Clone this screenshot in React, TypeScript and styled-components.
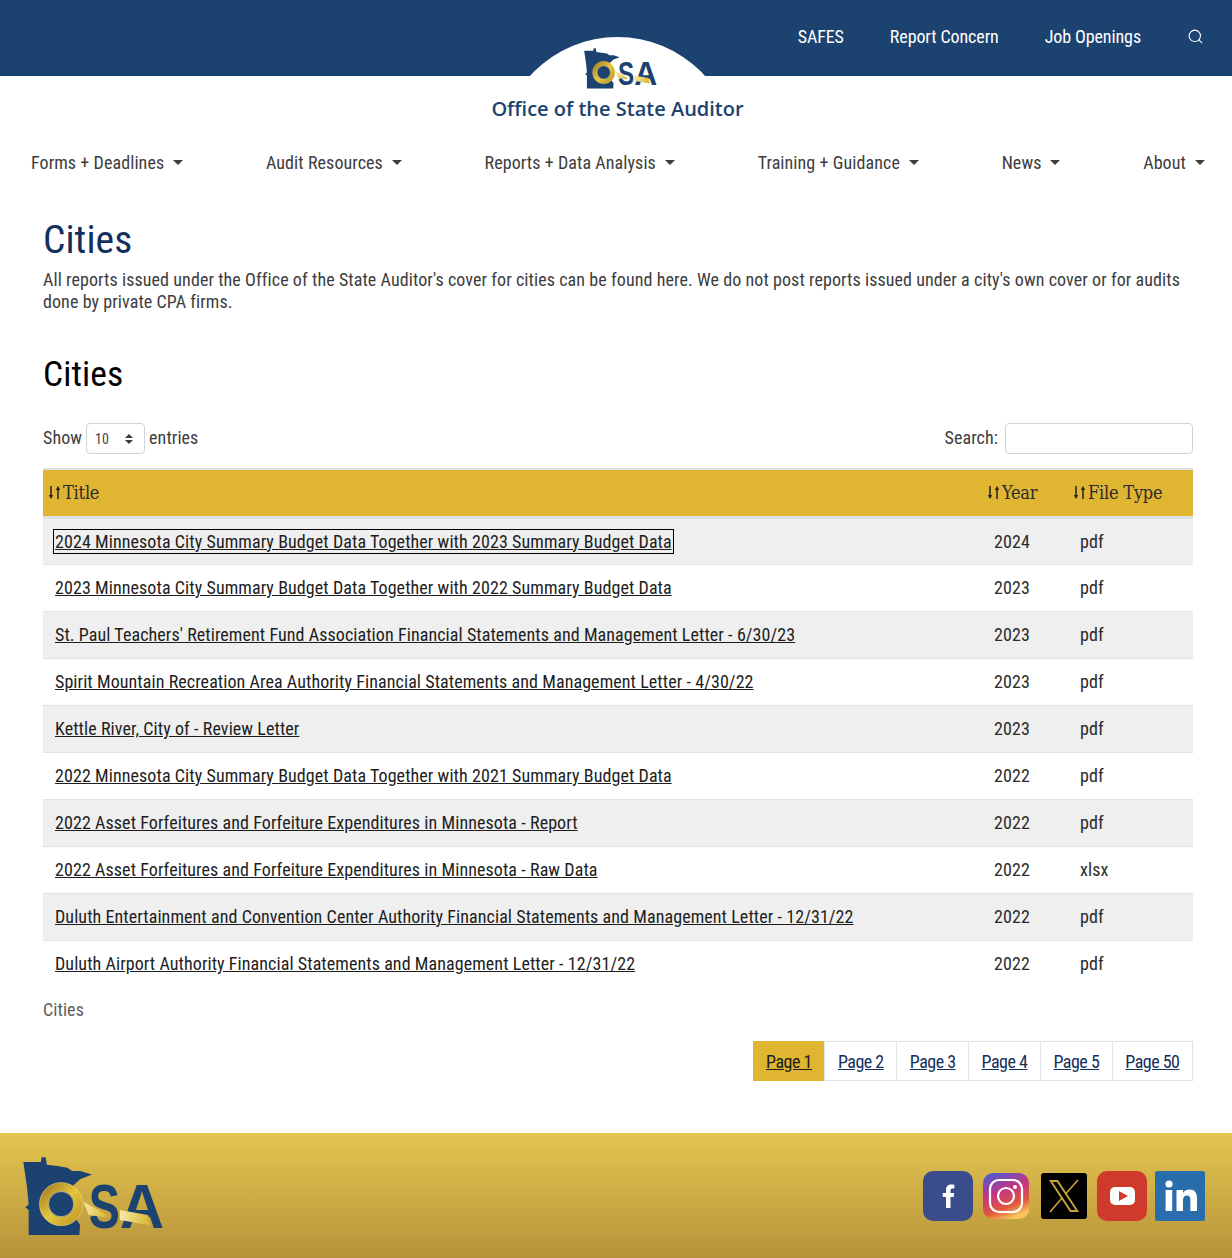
import React from 'react';
import styled, { createGlobalStyle } from 'styled-components';
import { FiSearch } from 'react-icons/fi';

const GlobalStyle = createGlobalStyle`
    html, body {
        margin: 0;
        padding: 0;
        background: #fff;
    }
    body {
        font-family: Roboto, "Noto Sans", sans-serif;
        font-stretch: 75%;
        font-size: 18px;
        letter-spacing: 0.08px;
        color: #3d3d3d;
    }
`;

const TopBar = styled.header`
    position: relative;
    height: 76px;
    background: #1c4270;
    display: flex;
    justify-content: flex-end;
    align-items: center;
    gap: 46px;
    padding: 0 28px 3px 0;
    box-sizing: border-box;
`;

const TopLink = styled.a`
    color: #fff;
    font-size: 18px;
    line-height: 22px;
    letter-spacing: -0.1px;
`;

const SearchIcon = styled(FiSearch)`
    stroke-width: 1.5;
`;

const Dome = styled.div`
    position: absolute;
    left: 530px;
    top: 37px;
    width: 175px;
    height: 39px;
    background: #fff;
    clip-path: circle(118px at 87.5px 118px);
`;

const HeaderLogo = styled.div`
    position: absolute;
    left: 584px;
    top: 48px;
    z-index: 2;
`;

const Brand = styled.div`
    height: 66px;
    display: flex;
    justify-content: center;
    padding: 19px 0 0 3px;
    box-sizing: border-box;
    font-family: "Open Sans", sans-serif;
    font-stretch: 100%;
    font-size: 20px;
    line-height: 27px;
    font-weight: 600;
    letter-spacing: 0;
    color: #1c4270;
`;

const MainNav = styled.nav`
    display: flex;
    justify-content: space-between;
    padding: 9px 27px 0 31px;
    height: 42px;
    box-sizing: border-box;
`;

const NavItem = styled.a`
    display: flex;
    align-items: center;
    gap: 9px;
    height: 22px;
    color: #3d3d3d;
`;

const Caret = styled.span`
    width: 0;
    height: 0;
    border-top: 5px solid #3d3d3d;
    border-left: 5px solid transparent;
    border-right: 5px solid transparent;
`;

const Main = styled.main`
    padding: 34px 39px 52px 43px;
`;

const PageTitle = styled.h1`
    margin: 0 0 7px;
    font-size: 39.5px;
    line-height: 44px;
    font-weight: 400;
    color: #142f5e;
`;

const Intro = styled.p`
    margin: 0 0 41px;
    line-height: 22px;
`;

const SectionTitle = styled.h2`
    margin: 0 0 29px;
    font-size: 35.5px;
    line-height: 40px;
    font-weight: 400;
    color: #000;
`;

const Controls = styled.div`
    display: flex;
    justify-content: space-between;
    align-items: center;
    height: 31px;
    margin-bottom: 14px;
`;

const Label = styled.label`
    display: flex;
    align-items: center;
    gap: 4px;
`;

const LabelText = styled.span`
    margin-top: -3px;
`;

const SelectWrap = styled.span`
    position: relative;
    display: inline-flex;
`;

const PageSize = styled.select`
    appearance: none;
    width: 59px;
    height: 31px;
    padding: 0 8px;
    border: 1px solid #ced4da;
    border-radius: 4px;
    background: #fff;
    color: #444;
    font-family: Roboto, sans-serif;
    font-stretch: 75%;
    font-size: 14px;
`;

const SelectArrows = styled.svg`
    position: absolute;
    right: 11px;
    top: 10px;
    pointer-events: none;
`;

const SearchInput = styled.input`
    width: 188px;
    height: 31px;
    margin-left: 3px;
    box-sizing: border-box;
    border: 1px solid #ced4da;
    border-radius: 4px;
    background: #fff;
`;

const Table = styled.table`
    width: 1150px;
    table-layout: fixed;
    border-collapse: collapse;
    border-top: 2px solid #dee2e6;
`;

const HeadRow = styled.tr`
    height: 48px;
    background: #dfb531;
    border-bottom: 3px solid #dee2e6;
`;

const Th = styled.th`
    padding: 1px 0 0 5px;
    text-align: left;
    font-family: "DejaVu Serif Condensed", "Liberation Serif", serif;
    font-stretch: normal;
    font-size: 18px;
    font-weight: 400;
    letter-spacing: -0.2px;
    color: #2b2b2b;
`;

const ThInner = styled.span`
    display: inline-flex;
    align-items: center;
    gap: 2px;
`;

const Row = styled.tr<{ $striped: boolean }>`
    height: 47px;
    background: ${({ $striped }) => ($striped ? '#efefef' : '#fff')};
    border-bottom: 1px solid #dee2e6;
    &:last-child {
        border-bottom: none;
    }
`;

const Td = styled.td`
    padding: 0 0 0 12px;
    color: #2b2b2b;
`;

const TitleLink = styled.a<{ $focused: boolean }>`
    color: #1d1d1d;
    text-decoration: underline;
    outline: ${({ $focused }) => ($focused ? '1.5px solid #000' : 'none')};
    outline-offset: 1px;
`;

const Caption = styled.div`
    margin-top: 12px;
    height: 42px;
    line-height: 22px;
    color: #5c5c5c;
`;

const Pager = styled.div`
    display: flex;
    justify-content: flex-end;
`;

const PageLink = styled.a<{ $active: boolean }>`
    height: 40px;
    box-sizing: border-box;
    display: flex;
    align-items: center;
    padding: 0 12.5px;
    border: 1px solid ${({ $active }) => ($active ? '#dfb531' : '#dee2e6')};
    margin-left: -1px;
    background: ${({ $active }) => ($active ? '#dfb531' : '#fff')};
    color: ${({ $active }) => ($active ? '#1d1d1d' : '#142f5e')};
    text-decoration: underline;
    letter-spacing: -0.5px;
`;

const Footer = styled.footer`
    height: 125px;
    box-sizing: border-box;
    padding: 24px 27px 0 23px;
    display: flex;
    justify-content: space-between;
    align-items: flex-start;
    background: linear-gradient(180deg, #e3c54f 0%, #b8933a 100%);
`;

const Socials = styled.div`
    display: flex;
    align-items: center;
    gap: 8px;
    margin-top: 14px;
`;

const SocialIcon = styled.svg<{ $small?: boolean }>`
    display: block;
    margin: ${({ $small }) => ($small ? '0 2px' : '0')};
`;

const rows = [
    ['2024 Minnesota City Summary Budget Data Together with 2023 Summary Budget Data', '2024', 'pdf'],
    ['2023 Minnesota City Summary Budget Data Together with 2022 Summary Budget Data', '2023', 'pdf'],
    ["St. Paul Teachers' Retirement Fund Association Financial Statements and Management Letter - 6/30/23", '2023', 'pdf'],
    ['Spirit Mountain Recreation Area Authority Financial Statements and Management Letter - 4/30/22', '2023', 'pdf'],
    ['Kettle River, City of - Review Letter', '2023', 'pdf'],
    ['2022 Minnesota City Summary Budget Data Together with 2021 Summary Budget Data', '2022', 'pdf'],
    ['2022 Asset Forfeitures and Forfeiture Expenditures in Minnesota - Report', '2022', 'pdf'],
    ['2022 Asset Forfeitures and Forfeiture Expenditures in Minnesota - Raw Data', '2022', 'xlsx'],
    ['Duluth Entertainment and Convention Center Authority Financial Statements and Management Letter - 12/31/22', '2022', 'pdf'],
    ['Duluth Airport Authority Financial Statements and Management Letter - 12/31/22', '2022', 'pdf'],
];

const navItems = ['Forms + Deadlines', 'Audit Resources', 'Reports + Data Analysis', 'Training + Guidance', 'News', 'About'];
const pages = ['Page 1', 'Page 2', 'Page 3', 'Page 4', 'Page 5', 'Page 50'];

// state outline, magnifier ring and the S / A of the OSA mark
const Logo: React.FC<{ id: string; width: number; height: number }> = ({ id, width, height }) => (
    <svg width={width} height={height} viewBox="68 80 425 238">
        <defs>
            <linearGradient id={`${id}-ring`} x1="0" y1="0" x2="1" y2="1">
                <stop offset="0" stopColor="#a97f25" />
                <stop offset="0.5" stopColor="#e6c63e" />
                <stop offset="1" stopColor="#c29a28" />
            </linearGradient>
            <linearGradient id={`${id}-bar`} x1="0" y1="0" x2="1" y2="0">
                <stop offset="0" stopColor="#f5e9a8" />
                <stop offset="1" stopColor="#d9b52e" />
            </linearGradient>
        </defs>
        <path
            d="M69 95 L122 95 L124 81 L136 81 L140 103 L172 107 L202 112 L216 122 L240 122 L276 133 L240 147 L215 170 L205 200 L210 240 L240 285 L238 315 L85 315 L85 240 L75 232 L85 222 L80 170 Z"
            fill="#1c4270"
        />
        <text x="266" y="294" fontFamily="Liberation Sans, sans-serif" fontWeight="700" fontSize="192" fill="#1c4270" textLength="94" lengthAdjust="spacingAndGlyphs">S</text>
        <text x="360" y="294" fontFamily="Liberation Sans, sans-serif" fontWeight="700" fontSize="192" fill="#1c4270" textLength="134" lengthAdjust="spacingAndGlyphs">A</text>
        <path d="M250 215 L320 253 L316 262 L266 254 Z" fill={`url(#${id}-bar)`} />
        <path d="M360 240 L445 255 L451 286 L360 270 Z" fill={`url(#${id}-bar)`} />
        <circle cx="183" cy="222" r="52" fill="#1c4270" stroke={`url(#${id}-ring)`} strokeWidth="27" />
        <circle cx="183" cy="222" r="38" fill="none" stroke="#f2e3a0" strokeWidth="2" />
        <circle cx="183" cy="222" r="65" fill="none" stroke="#f2e3a0" strokeWidth="1.5" />
    </svg>
);

const SortArrows = () => (
    <svg width="13" height="15" viewBox="0 0 13 15">
        <path d="M3 1 V11" stroke="#222" strokeWidth="1.5" />
        <path d="M0.8 10 H5.2 L3 14 Z" fill="#222" />
        <path d="M10 14 V4" stroke="#222" strokeWidth="1.5" />
        <path d="M7.8 5 H12.2 L10 1 Z" fill="#222" />
    </svg>
);

const SocialLinks = () => (
    <Socials>
        <SocialIcon width="50" height="50" viewBox="0 0 50 50">
            <rect width="50" height="50" rx="10" fill="#3b4c8c" />
            <path d="M27.5 37 V26 H30.6 L31.2 22 H27.5 V19.5 C27.5 18.2 28 17.5 29.4 17.5 H31.3 V13.8 C30.4 13.7 29.3 13.6 28.2 13.6 C25 13.6 23 15.5 23 19 V22 H19.8 V26 H23 V37 Z" fill="#fff" />
        </SocialIcon>
        <SocialIcon $small width="46" height="46" viewBox="0 0 46 46">
            <defs>
                <linearGradient id="ig" x1="0.2" y1="0" x2="0.6" y2="1">
                    <stop offset="0" stopColor="#4f5bd5" />
                    <stop offset="0.4" stopColor="#c13584" />
                    <stop offset="0.75" stopColor="#e1573c" />
                    <stop offset="1" stopColor="#f9c85c" />
                </linearGradient>
            </defs>
            <rect width="46" height="46" rx="10" fill="url(#ig)" />
            <rect x="7" y="7" width="32" height="32" rx="9" fill="none" stroke="#fff" strokeWidth="2.2" />
            <circle cx="23" cy="23" r="8" fill="none" stroke="#fff" strokeWidth="2.2" />
            <circle cx="32" cy="14" r="2" fill="#fff" />
        </SocialIcon>
        <SocialIcon $small width="46" height="46" viewBox="0 0 46 46">
            <rect width="46" height="46" rx="3" fill="#000" />
            <path d="M8 7 H17 L38 39 H29 Z M11.5 9 L30 37 H34.5 L16 9 Z" fill="#c9a43a" fillRule="evenodd" />
            <path d="M37 7 L25 20.5 M21 25 L9 39" stroke="#c9a43a" strokeWidth="1.6" />
        </SocialIcon>
        <SocialIcon width="50" height="50" viewBox="0 0 50 50">
            <rect width="50" height="50" rx="10" fill="#cf3a2c" />
            <rect x="13" y="16" width="25" height="18" rx="5" fill="#fff" />
            <path d="M22 20 L31 25 L22 30 Z" fill="#cf3a2c" />
        </SocialIcon>
        <SocialIcon width="50" height="50" viewBox="0 0 50 50">
            <rect width="50" height="50" rx="2" fill="#2a6dad" />
            <circle cx="14" cy="13" r="3.6" fill="#fff" />
            <rect x="10.6" y="19" width="6.6" height="21" fill="#fff" />
            <path d="M21.5 19 H28 V22 C29.2 20 31.5 18.6 34.5 18.6 C40 18.6 42 22 42 27.5 V40 H35.4 V29 C35.4 26 34.6 24.4 32 24.4 C29.4 24.4 28 26.2 28 29 V40 H21.5 Z" fill="#fff" />
        </SocialIcon>
    </Socials>
);

const App: React.FC = () => (
    <>
        <GlobalStyle />
        <TopBar>
            <Dome />
            <HeaderLogo>
                <Logo id="top" width={73} height={41} />
            </HeaderLogo>
            <TopLink>SAFES</TopLink>
            <TopLink>Report Concern</TopLink>
            <TopLink>Job Openings</TopLink>
            <SearchIcon color="#fff" size={17} />
        </TopBar>
        <Brand>Office of the State Auditor</Brand>
        <MainNav>
            {navItems.map((item) => (
                <NavItem key={item}>
                    {item}
                    <Caret />
                </NavItem>
            ))}
        </MainNav>
        <Main>
            <PageTitle>Cities</PageTitle>
            <Intro>
                All reports issued under the Office of the State Auditor's cover for cities can be found here. We do not post reports issued under a city's own cover or for audits done by private CPA firms.
            </Intro>
            <SectionTitle>Cities</SectionTitle>
            <Controls>
                <Label>
                    <LabelText>Show</LabelText>
                    <SelectWrap>
                        <PageSize defaultValue="10">
                            <option value="10">10</option>
                            <option value="25">25</option>
                            <option value="50">50</option>
                        </PageSize>
                        <SelectArrows width="10" height="12" viewBox="0 0 10 12">
                            <path d="M1 5 L5 1 L9 5 Z M1 7 L5 11 L9 7 Z" fill="#343a40" />
                        </SelectArrows>
                    </SelectWrap>
                    <LabelText>entries</LabelText>
                </Label>
                <Label>
                    <LabelText>Search:</LabelText>
                    <SearchInput />
                </Label>
            </Controls>
            <Table>
                <colgroup>
                    <col width="939" />
                    <col width="86" />
                    <col width="125" />
                </colgroup>
                <thead>
                    <HeadRow>
                        {['Title', 'Year', 'File Type'].map((h) => (
                            <Th key={h}>
                                <ThInner>
                                    <SortArrows />
                                    {h}
                                </ThInner>
                            </Th>
                        ))}
                    </HeadRow>
                </thead>
                <tbody>
                    {rows.map(([title, year, type], i) => (
                        <Row key={title} $striped={i % 2 === 0}>
                            <Td>
                                <TitleLink href="#" $focused={i === 0}>{title}</TitleLink>
                            </Td>
                            <Td>{year}</Td>
                            <Td>{type}</Td>
                        </Row>
                    ))}
                </tbody>
            </Table>
            <Caption>Cities</Caption>
            <Pager>
                {pages.map((p, i) => (
                    <PageLink key={p} href="#" $active={i === 0}>{p}</PageLink>
                ))}
            </Pager>
        </Main>
        <Footer>
            <Logo id="foot" width={141} height={79} />
            <SocialLinks />
        </Footer>
    </>
);

export default App;
